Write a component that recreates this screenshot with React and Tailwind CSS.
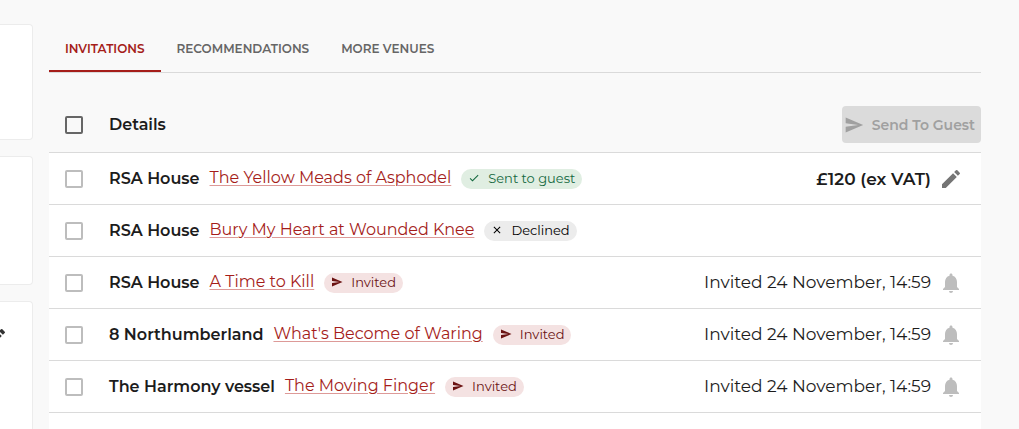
import React, { useState } from "react";
import {
  MdCheck,
  MdClose,
  MdEdit,
  MdNotifications,
  MdSend,
} from "react-icons/md";

const tabs = ["Invitations", "Recommendations", "More venues"];

const invitations = [
  {
    id: 1,
    venue: "RSA House",
    space: "The Yellow Meads of Asphodel",
    status: "sent",
    price: "£120 (ex VAT)",
  },
  {
    id: 2,
    venue: "RSA House",
    space: "Bury My Heart at Wounded Knee",
    status: "declined",
  },
  {
    id: 3,
    venue: "RSA House",
    space: "A Time to Kill",
    status: "invited",
    date: "Invited 24 November, 14:59",
  },
  {
    id: 4,
    venue: "8 Northumberland",
    space: "What's Become of Waring",
    status: "invited",
    date: "Invited 24 November, 14:59",
  },
  {
    id: 5,
    venue: "The Harmony vessel",
    space: "The Moving Finger",
    status: "invited",
    date: "Invited 24 November, 14:59",
  },
];

const statuses = {
  sent: {
    label: "Sent to guest",
    Icon: MdCheck,
    style: "bg-[#e0eee2] text-[#14693f]",
  },
  declined: {
    label: "Declined",
    Icon: MdClose,
    style: "bg-[#ececec] text-black",
  },
  invited: {
    label: "Invited",
    Icon: MdSend,
    style: "bg-[#f4e2e2] text-[#6b1212]",
  },
};

const StatusChip = ({ status }) => {
  const { label, Icon, style } = statuses[status];

  return (
    <span
      className={`flex h-5 items-center gap-2 rounded-full px-[7px] pb-px text-[13px] leading-5 ${style}`}
    >
      <Icon size={12} />
      {label}
    </span>
  );
};

const Checkbox = ({ label, checked, onChange, dark = false }) => (
  <input
    type="checkbox"
    aria-label={label}
    checked={checked}
    onChange={onChange}
    className={`block size-[18px] appearance-none rounded-xs border-2 checked:bg-[#a51d1a] ${
      dark ? "border-[#666666]" : "border-[#bdbdbd]"
    }`}
  />
);

const App = () => {
  const [activeTab, setActiveTab] = useState("Invitations");
  const [selected, setSelected] = useState([]);

  const toggle = (id) => {
    setSelected((prev) =>
      prev.includes(id) ? prev.filter((item) => item !== id) : [...prev, id]
    );
  };

  const toggleAll = () => {
    setSelected(
      selected.length === invitations.length
        ? []
        : invitations.map((item) => item.id)
    );
  };

  return (
    <div className="flex min-h-screen gap-4 bg-[#f9f9f9] pt-6 pr-[38px] font-[Montserrat,Inter,sans-serif] text-[#1c1c1c]">
      <aside className="flex w-[33px] shrink-0 flex-col gap-4 overflow-hidden">
        <div className="h-29 rounded-r border border-l-0 border-[#ececec] bg-white"></div>
        <div className="h-[129px] rounded-r border border-l-0 border-[#ececec] bg-white"></div>
        <div className="flex-1 rounded-tr border border-b-0 border-l-0 border-[#ececec] bg-white pt-6">
          <button type="button" aria-label="Edit" className="-ml-4 block">
            <MdEdit size={24} color="#333333" />
          </button>
        </div>
      </aside>

      <main className="flex min-w-0 flex-1 flex-col">
        <div role="tablist" className="flex border-b border-[#dadada]">
          {tabs.map((tab) => (
            <button
              key={tab}
              type="button"
              role="tab"
              aria-selected={tab === activeTab}
              onClick={() => setActiveTab(tab)}
              className={`h-12 border-b-2 px-4 pt-1 text-[12px] font-semibold uppercase ${
                tab === activeTab
                  ? "border-[#a51d1a] text-[#a51d1a]"
                  : "border-transparent text-[#666666]"
              }`}
            >
              {tab}
            </button>
          ))}
        </div>

        <table className="mt-6 w-full border-separate border-spacing-0 text-left text-[16px] leading-6">
          <thead>
            <tr>
              <th className="h-14 w-15 border-b border-[#dadada] pl-4">
                <Checkbox
                  dark
                  label="Select all"
                  checked={selected.length === invitations.length}
                  onChange={toggleAll}
                />
              </th>
              <th className="border-b border-[#dadada] font-semibold">
                Details
              </th>
              <th className="border-b border-[#dadada]">
                <button
                  type="button"
                  disabled={selected.length === 0}
                  className="ml-auto flex h-[37px] items-center gap-2 rounded bg-[#dbdbdb] pr-1.5 pl-0.5 text-[14px] font-semibold text-[#a0a0a0]"
                >
                  <MdSend size={20} />
                  Send To Guest
                </button>
              </th>
            </tr>
          </thead>
          <tbody className="bg-white">
            {invitations.map((item) => (
              <tr key={item.id}>
                <td className="h-13 border-b border-[#dadada] pl-4">
                  <Checkbox
                    label={`Select ${item.space}`}
                    checked={selected.includes(item.id)}
                    onChange={() => toggle(item.id)}
                  />
                </td>
                <td className="border-b border-[#dadada]">
                  <div className="flex items-center gap-2.5">
                    <span className="font-semibold">{item.venue}</span>
                    <a
                      href="#"
                      className="pb-0.5 text-[#a51d1a] underline decoration-[#dd9a98] decoration-1 underline-offset-2"
                    >
                      {item.space}
                    </a>
                    <StatusChip status={item.status} />
                  </div>
                </td>
                <td className="border-b border-[#dadada] pr-[18px]">
                  <div className="flex items-center justify-end gap-2 text-[17px]">
                    {item.price && (
                      <>
                        <span className="font-semibold">{item.price}</span>
                        <button type="button" aria-label="Edit price">
                          <MdEdit size={24} color="#757575" />
                        </button>
                      </>
                    )}
                    {item.date && (
                      <>
                        <span className="pb-0.5">{item.date}</span>
                        <button type="button" aria-label="Send reminder">
                          <MdNotifications size={24} color="#bdbdbd" />
                        </button>
                      </>
                    )}
                  </div>
                </td>
              </tr>
            ))}
          </tbody>
        </table>
        <div className="flex-1 bg-white"></div>
      </main>
    </div>
  );
};

export default App;
